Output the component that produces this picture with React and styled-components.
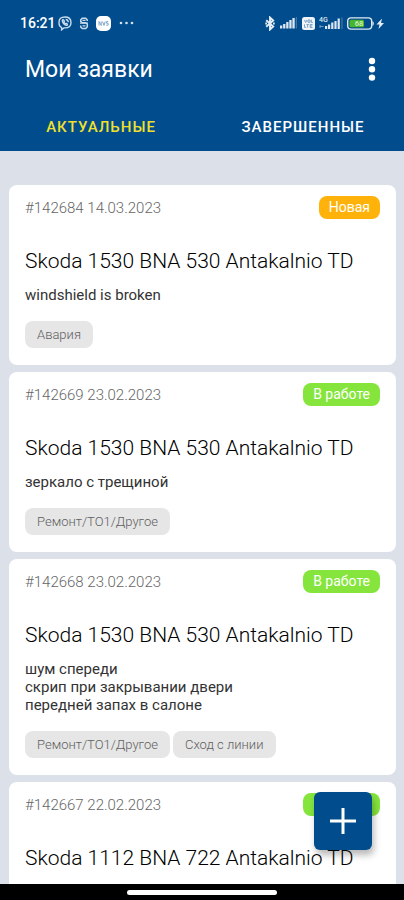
import React, { useState } from "react";
import styled, { createGlobalStyle } from "styled-components";

const color = {
  primary: "#014c8c",
  accent: "#f0e02c",
  page: "#dce0e8",
  white: "#ffffff",
  orange: "#ffb30a",
  green: "#85e53d",
  chip: "#e6e6e6",
  muted: "#666666",
  chipText: "#606060",
  body: "#333333",
  text: "#000000",
};

const GlobalStyle = createGlobalStyle`
  * {
    box-sizing: border-box;
  }
  body {
    margin: 0;
    font-family: Roboto, "Noto Sans", sans-serif;
    color: ${color.text};
  }
  button {
    font-family: inherit;
    border: 0;
    padding: 0;
    cursor: pointer;
  }
`;

const Screen = styled.div`
  display: flex;
  flex-direction: column;
  height: 100vh;
  background: ${color.page};
`;

const Header = styled.header`
  flex: none;
  background: ${color.primary};
  color: ${color.white};
`;

const StatusBar = styled.div`
  display: flex;
  align-items: center;
  justify-content: space-between;
  height: 46px;
  padding: 0 20px;
`;

const StatusGroup = styled.div`
  display: flex;
  align-items: center;
  gap: ${({ $gap }) => $gap}px;
  svg {
    display: block;
  }
`;

const Clock = styled.time`
  font-size: 14px;
  font-weight: 500;
  line-height: 16px;
  margin-right: -5px;
`;

const AppBar = styled.div`
  display: flex;
  align-items: center;
  justify-content: space-between;
  height: 48px;
  margin-bottom: 9px;
  padding: 0 20px 0 25px;
`;

const Heading = styled.h1`
  margin: 0;
  font-size: 23px;
  font-weight: 400;
  line-height: 28px;
`;

const MenuButton = styled.button`
  display: flex;
  justify-content: center;
  width: 24px;
  background: none;
  color: inherit;
`;

const Tabs = styled.div`
  display: grid;
  grid-template-columns: 1fr 1fr;
`;

const Tab = styled.button`
  height: 48px;
  background: none;
  color: ${({ $active }) => ($active ? color.accent : color.white)};
  font-size: 15px;
  font-weight: 500;
  letter-spacing: 1px;
  text-transform: uppercase;
`;

const Main = styled.main`
  position: relative;
  flex: 1;
  min-height: 0;
`;

const List = styled.ul`
  display: flex;
  flex-direction: column;
  gap: 7px;
  height: 100%;
  margin: 0;
  padding: 34px 8px 8px 9px;
  list-style: none;
  overflow-y: auto;
  scrollbar-width: none;
`;

const Card = styled.li`
  flex: none;
  padding: 11px 16px 17px;
  border-radius: 8px;
  background: ${color.white};
`;

const CardTop = styled.div`
  display: flex;
  align-items: center;
  justify-content: space-between;
  height: 23px;
`;

const Meta = styled.span`
  font-size: 15px;
  font-weight: 300;
  line-height: 20px;
  color: ${color.muted};
`;

const Badge = styled.span`
  padding: 0 10px;
  border-radius: 8px;
  background: ${({ $tone }) => color[$tone]};
  color: ${color.white};
  font-size: 14px;
  line-height: 23px;
`;

const Vehicle = styled.h2`
  margin: 29px 0 12px;
  font-size: 21px;
  font-weight: 300;
  line-height: 26px;
`;

const Description = styled.p`
  margin: 0 0 17px;
  color: ${color.body};
  font-size: 15px;
  line-height: 18px;
  white-space: pre-line;
`;

const Chips = styled.div`
  display: flex;
  flex-wrap: wrap;
  gap: 3px;
`;

const Chip = styled.span`
  padding: 0 12px;
  border-radius: 8px;
  background: ${color.chip};
  color: ${color.chipText};
  font-size: 13px;
  font-weight: 300;
  line-height: 27px;
`;

const AddButton = styled.button`
  position: absolute;
  right: 32px;
  bottom: 34px;
  display: flex;
  align-items: center;
  justify-content: center;
  width: 58px;
  height: 58px;
  border-radius: 6px;
  background: ${color.primary};
  color: ${color.white};
  box-shadow: 2px 5px 7px rgba(0, 0, 0, 0.28);
`;

const NavBar = styled.footer`
  flex: none;
  display: flex;
  justify-content: center;
  height: 16px;
  padding-top: 6px;
  background: #000;
`;

const NavHandle = styled.div`
  width: 37%;
  height: 5px;
  border-radius: 3px;
  background: ${color.white};
`;

const ViberIcon = () => (
  <svg width="14" height="15" viewBox="0 0 14 15" fill="none" stroke="#c9dcec" strokeWidth="1.4">
    <path d="M7 1C3 1 1 2.300 1 6.500c0 2.800.8 4.300 2.600 5v2.300L6 11.900h1c4 0 6-1.300 6-5.400S11 1 7 1z" />
    <path d="M4.600 3.700c-1.200 1 .9 4.800 3.500 5.600 1 .3 1.700-.7 1.200-1.200L8.100 7.300l-.7.500C6.600 7.500 6 6.700 5.900 6l.5-.6-.8-1.500zM7.700 3.500c1.600.1 2.500 1.100 2.500 2.700" />
  </svg>
);

const SyncIcon = () => (
  <svg width="10" height="13" viewBox="0 0 10 13" fill="none" stroke="#c9dcec" strokeWidth="1.5">
    <path d="M8.300 4V3L6.800 1.300H3.200L1.700 3v1.300l1.500 1.400h3.600l1.500 1.500v2.600l-1.500 1.700H3.200L1.700 10V8.500" />
    <path d="M1 6.200h8M3.500 3.400h3M3.500 8.900h3" strokeWidth="1.200" />
  </svg>
);

const AppIcon = () => (
  <svg width="15" height="15" viewBox="0 0 15 15">
    <rect width="15" height="15" rx="5" fill="#fff" />
    <path d="M3 9.500v-4l2.200 4v-4M6.500 5.500L8 9.500l1.200-4M12.200 5.600h-1.700v1.600h1.600v2h-1.800" fill="none" stroke="#7fa6c9" strokeWidth="1" />
  </svg>
);

const DotsIcon = () => (
  <svg width="16" height="4" viewBox="0 0 16 4" fill="#d5e2ee">
    <circle cx="3" cy="2" r="1.300" />
    <circle cx="8.500" cy="2" r="1.300" />
    <circle cx="14" cy="2" r="1.300" />
  </svg>
);

const BluetoothIcon = () => (
  <svg width="11" height="15" viewBox="0 0 11 15" fill="none" stroke="#e6eef6" strokeWidth="1.900">
    <path d="M1.200 4.200l7 6.300L5 13.500v-12l3.200 3-7 6.300" />
    <path d="M.3 7.500h1.700M8 7.500h1.700" />
  </svg>
);

const SignalIcon = () => (
  <svg width="18" height="12" viewBox="0 0 18 12" fill="#dce8f2">
    <rect x="0" y="8.500" width="2.300" height="3" />
    <rect x="3.100" y="7" width="2.300" height="4.500" />
    <rect x="6.200" y="5" width="2.300" height="6.500" />
    <rect x="9.300" y="3" width="2.300" height="8.500" />
    <rect x="12.400" y="1" width="2.300" height="10.500" />
    <rect x="15.800" y="0" width="1" height="11.500" opacity="0.350" />
  </svg>
);

const VolteIcon = () => (
  <svg width="13" height="13" viewBox="0 0 13 13">
    <rect width="13" height="13" rx="2.500" fill="#eef4f9" />
    <g fill="none" stroke="#6f97bd" strokeWidth="0.900">
      <path d="M2.500 3l1.200 2.500L5 3M6 3h2v2.300H6zM9.300 2.700v2.800h1.500" />
      <path d="M2.500 7.300v3h1.700M4.500 7.500h2.300M5.700 7.500v3M10.500 7.500H8.200v3h2.300M8.200 9h2" />
    </g>
  </svg>
);

const MobileDataIcon = () => (
  <svg width="24" height="14" viewBox="0 0 24 14" fill="#dce8f2">
    <text x="0" y="6" fontSize="7" fontWeight="500">4G</text>
    <path d="M1 10.500h3.500M1.500 9l-1.200 1.500L1.500 12" fill="none" stroke="#7fa6c9" strokeWidth="0.900" />
    <rect x="6" y="10" width="2.200" height="3" />
    <rect x="9" y="8.500" width="2.200" height="4.500" />
    <rect x="12.200" y="6.500" width="2.200" height="6.500" />
    <rect x="15.400" y="5" width="2.200" height="8" />
    <rect x="18.600" y="2.500" width="2.200" height="10.500" />
    <rect x="22.500" y="1.500" width="1" height="11.500" opacity="0.350" />
  </svg>
);

const BatteryIcon = () => (
  <svg width="37" height="13" viewBox="0 0 37 13">
    <rect x="0.700" y="0.900" width="24" height="11.200" rx="3.400" fill="none" stroke="#dfe9f2" strokeWidth="1.400" />
    <rect x="2.500" y="2.700" width="14.500" height="7.600" rx="1.500" fill="#48b52c" />
    <path d="M25.400 4.200c1.900.5 1.900 4.100 0 4.600z" fill="#dfe9f2" />
    <text x="12" y="9.200" fontSize="7.500" fontWeight="500" fill="#d9f5cf" textAnchor="middle">68</text>
    <path d="M35 1.500l-5.500 6h3l-1 4.500 5.500-6h-3z" fill="#e6eef6" />
  </svg>
);

const MoreIcon = () => (
  <svg width="8" height="26" viewBox="0 0 8 26" fill="currentColor">
    <circle cx="4" cy="4" r="3.200" />
    <circle cx="4" cy="12.300" r="3.200" />
    <circle cx="4" cy="20.600" r="3.200" />
  </svg>
);

const PlusIcon = () => (
  <svg width="26" height="26" viewBox="0 0 26 26" stroke="currentColor" strokeWidth="3">
    <path d="M13 0v26M0 13h26" />
  </svg>
);

const tabs = ["Актуальные", "Завершенные"];

const requests = [
  {
    id: 142684,
    date: "14.03.2023",
    status: "Новая",
    tone: "orange",
    vehicle: "Skoda 1530 BNA 530 Antakalnio TD",
    text: "windshield is broken",
    tags: ["Авария"],
  },
  {
    id: 142669,
    date: "23.02.2023",
    status: "В работе",
    tone: "green",
    vehicle: "Skoda 1530 BNA 530 Antakalnio TD",
    text: "зеркало с трещиной",
    tags: ["Ремонт/ТО1/Другое"],
  },
  {
    id: 142668,
    date: "23.02.2023",
    status: "В работе",
    tone: "green",
    vehicle: "Skoda 1530 BNA 530 Antakalnio TD",
    text: "шум спереди\nскрип при закрывании двери\nпередней запах в салоне",
    tags: ["Ремонт/ТО1/Другое", "Сход с линии"],
  },
  {
    id: 142667,
    date: "22.02.2023",
    status: "В работе",
    tone: "green",
    vehicle: "Skoda 1112 BNA 722 Antakalnio TD",
    text: "",
    tags: [],
  },
];

const RequestCard = ({ request }) => {
  const { id, date, status, tone, vehicle, text, tags } = request;
  return (
    <Card>
      <CardTop>
        <Meta>
          #{id} {date}
        </Meta>
        <Badge $tone={tone}>{status}</Badge>
      </CardTop>
      <Vehicle>{vehicle}</Vehicle>
      {text && <Description>{text}</Description>}
      {tags.length > 0 && (
        <Chips>
          {tags.map((tag) => (
            <Chip key={tag}>{tag}</Chip>
          ))}
        </Chips>
      )}
    </Card>
  );
};

const App = () => {
  const [active, setActive] = useState(0);
  return (
    <Screen>
      <GlobalStyle />
      <Header>
        <StatusBar>
          <StatusGroup $gap={7}>
            <Clock>16:21</Clock>
            <ViberIcon />
            <SyncIcon />
            <AppIcon />
            <DotsIcon />
          </StatusGroup>
          <StatusGroup $gap={4}>
            <BluetoothIcon />
            <SignalIcon />
            <VolteIcon />
            <MobileDataIcon />
            <BatteryIcon />
          </StatusGroup>
        </StatusBar>
        <AppBar>
          <Heading>Мои заявки</Heading>
          <MenuButton type="button" aria-label="Меню">
            <MoreIcon />
          </MenuButton>
        </AppBar>
        <Tabs role="tablist">
          {tabs.map((tab, index) => (
            <Tab
              key={tab}
              type="button"
              role="tab"
              aria-selected={active === index}
              $active={active === index}
              onClick={() => setActive(index)}
            >
              {tab}
            </Tab>
          ))}
        </Tabs>
      </Header>
      <Main>
        <List>
          {requests.map((request) => (
            <RequestCard key={request.id} request={request} />
          ))}
        </List>
        <AddButton type="button" aria-label="Добавить заявку">
          <PlusIcon />
        </AddButton>
      </Main>
      <NavBar>
        <NavHandle />
      </NavBar>
    </Screen>
  );
};

export default App;
